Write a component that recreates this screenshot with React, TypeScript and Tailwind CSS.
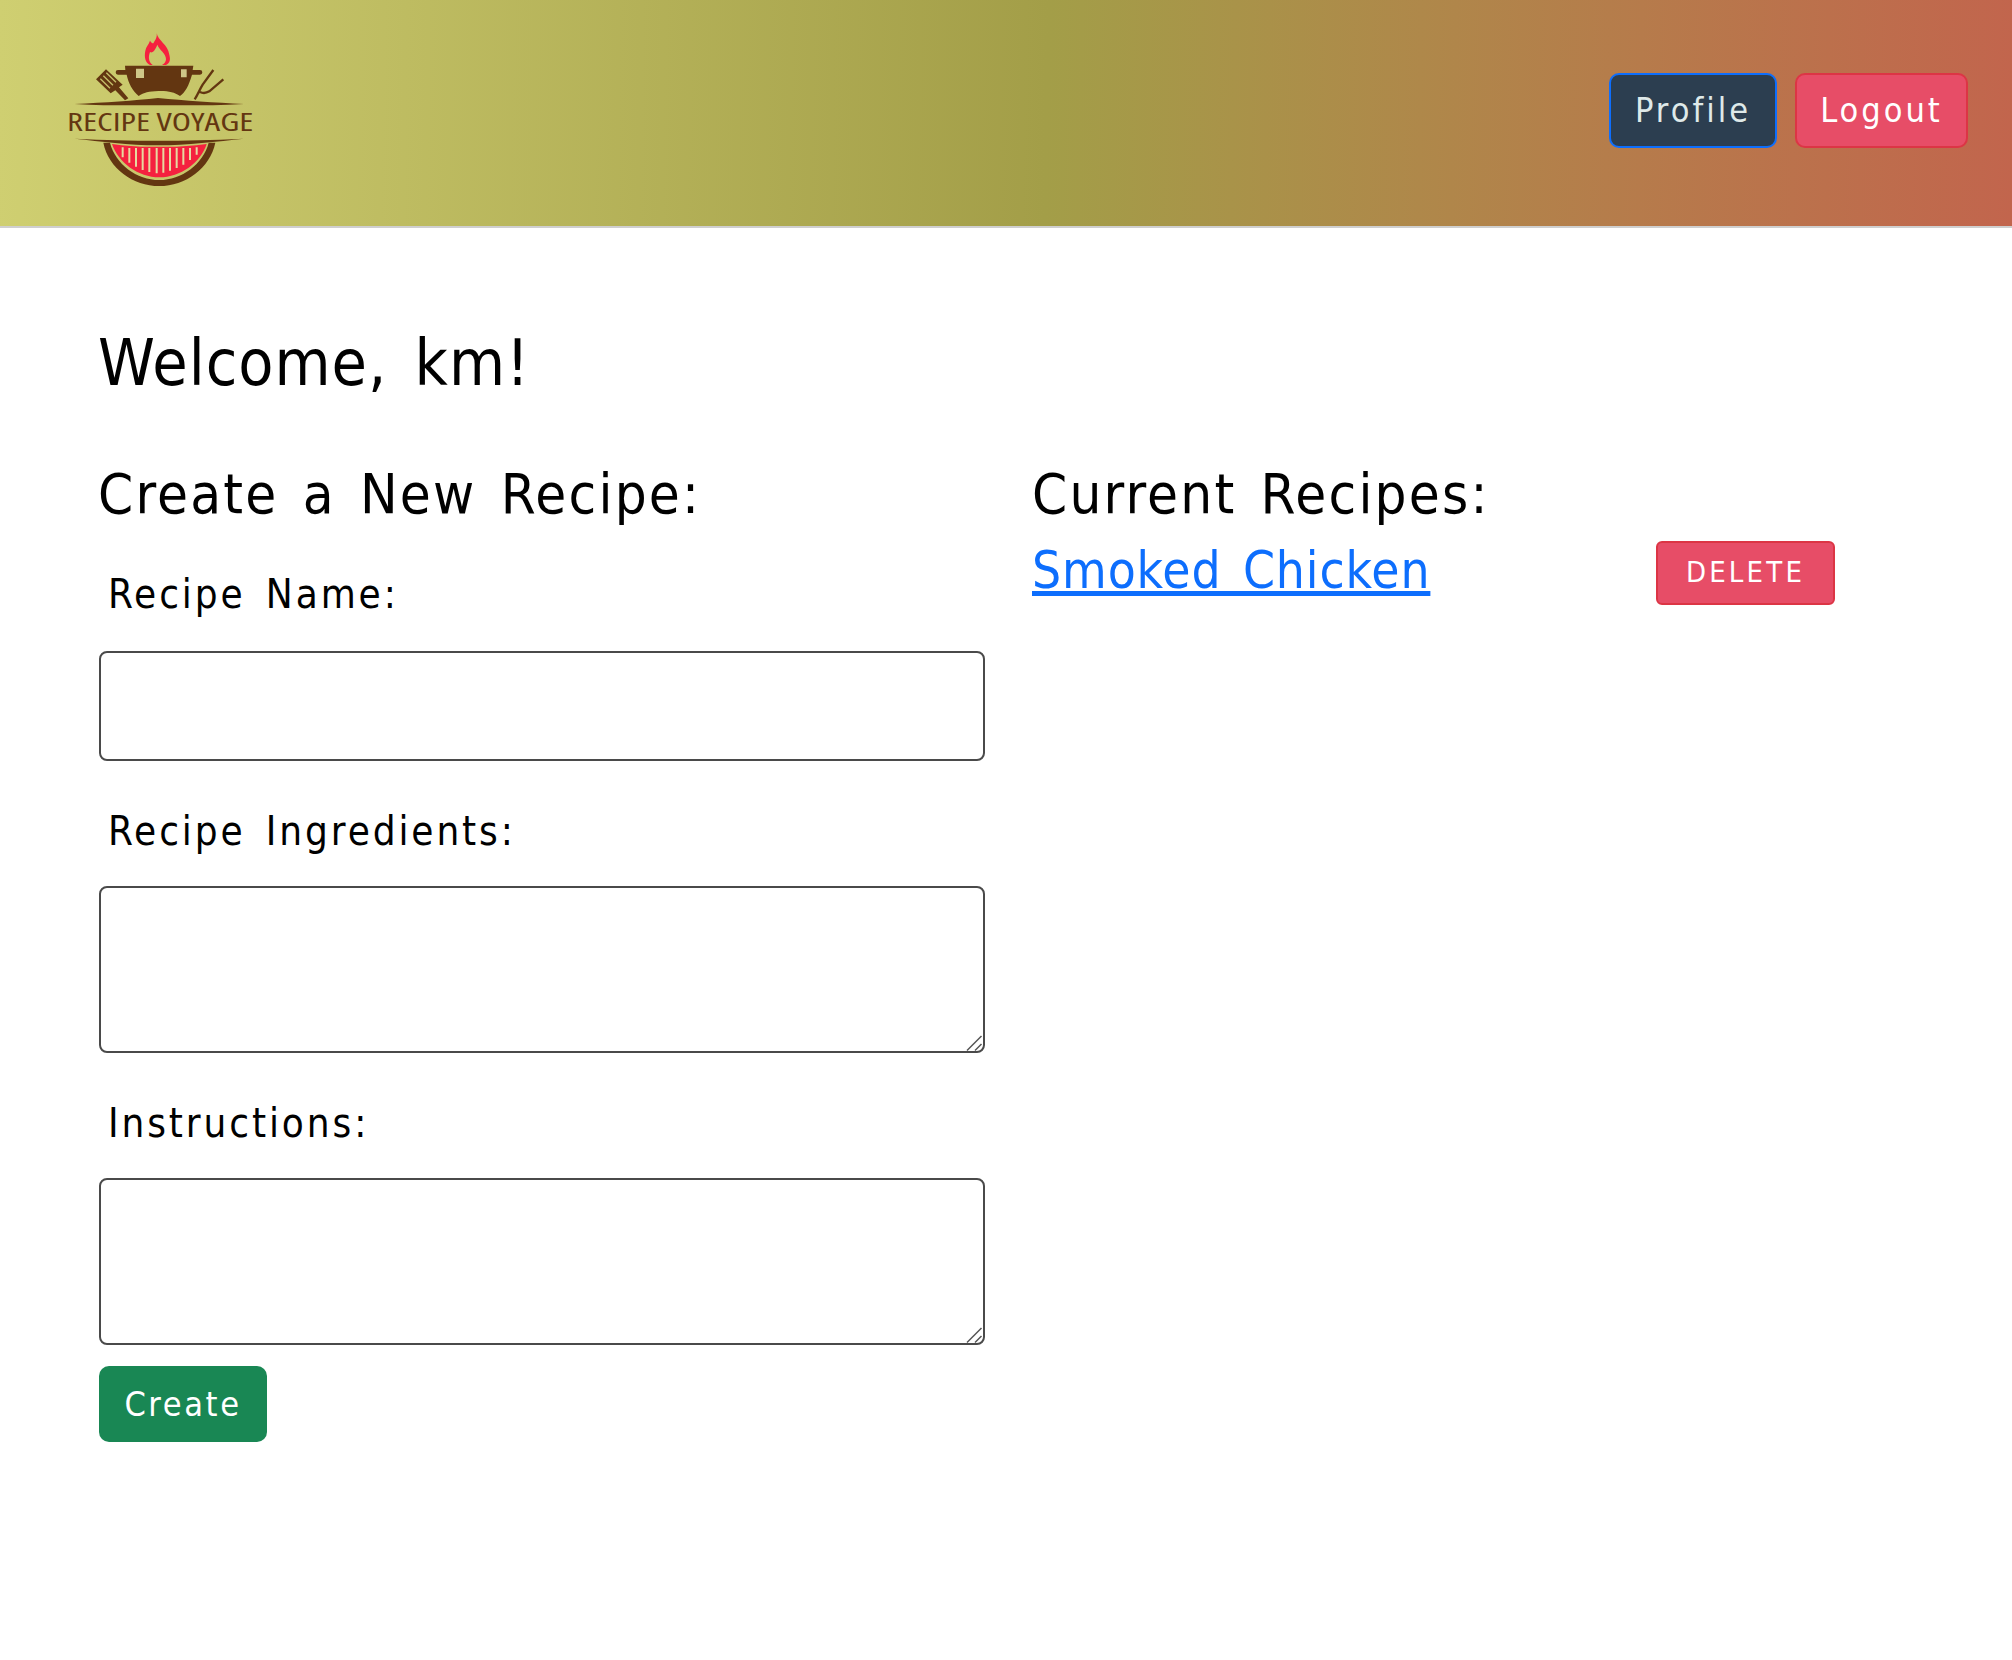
import React from "react";

function Logo() {
  return (
    <svg viewBox="0 0 720 600" className="-mt-[6px] h-[200px] w-[240px] shrink-0">
      {/* flame */}
      <path
        fillRule="evenodd"
        d="M350 70C354 92 384 104 388 134 392 150 390 158 378 165H330C316 158 312 142 316 122 318 110 326 104 330 92 334 98 336 100 340 100 346 90 352 82 350 70zM352 104C358 120 378 130 378 148 378 156 372 162 366 165H338C326 156 324 142 330 126 336 130 344 124 352 104z"
        fill="#f5213f"
      />
      {/* pot */}
      <path d="M255 167H460L458 180H480a7 7 0 0 1 0 14H456C446 228 436 246 420 258 402 246 384 242 355 243 326 244 312 248 296 258 276 240 266 220 260 194H234a7 7 0 0 1 0-14H256z" fill="#633611" />
      <path d="M288 176h24v28h-24zM423 178h17v24h-17z" fill="#cfc687" />
      {/* spatula */}
      <path d="M198 178L168 208 212 250 226 241 255 271 265 265 237 232 248 224z" fill="#633611" />
      <path d="M190 197L219 226M181 206L210 235M199 188L228 217" stroke="#c5be6a" strokeWidth="4" />
      {/* fork */}
      <path d="M520 180L488 224C478 240 474 254 464 268M550 208L508 244C498 250 488 250 480 246" fill="none" stroke="#633611" strokeWidth="7" />
      {/* bars around the name */}
      <path d="M104 282c90-4 180-10 250-18 80 8 170 14 258 18-90 5-170 4-258 4-90 0-170 1-250-4z" fill="#633611" />
      <text
        x="81"
        y="362"
        textLength="559"
        lengthAdjust="spacingAndGlyphs"
        fill="#633611"
        fontSize="76"
        fontWeight="500"
        fontFamily="'Open Sans', sans-serif"
      >
        RECIPE VOYAGE
      </text>
      <path d="M104 386c90 4 170 6 250 6s160-2 258-6c-80 8-170 20-258 20-90 0-170-12-250-20z" fill="#633611" />
      {/* grill bowl */}
      <path d="M190 398C205 475 280 528 358 528 436 528 510 475 526 398H506C490 462 425 510 358 510 290 510 226 462 210 398z" fill="#633611" />
      <path d="M216 402C235 458 295 502 358 502 422 502 482 458 500 402 450 408 400 412 358 410 310 412 260 408 216 402z" fill="#f5213f" />
      <path
        d="M248 412v30M268 414v44M288 414v56M308 414v66M328 414v72M350 414v76M370 414v74M390 414v68M410 414v60M430 414v50M450 414v36M470 412v22"
        stroke="#e6d9a0"
        strokeWidth="6"
      />
    </svg>
  );
}

function FormLabel({ children }: { children: React.ReactNode }) {
  return (
    <label className="mb-[32px] ml-[9px] block text-[40px] leading-[46px] tracking-[2.9px] [word-spacing:6px]">
      {children}
    </label>
  );
}

function TextArea() {
  return (
    <div className="relative">
      <textarea className="block h-[167px] w-full resize-none rounded-[8px] border-2 border-[#4a4a4a]" />
      <svg viewBox="0 0 18 18" className="absolute bottom-[1px] right-[2px] h-[18px] w-[18px]">
        <path d="M2 16.5L16.5 2M10 16.5L16.5 10" stroke="#555" strokeWidth="1.5" />
      </svg>
    </div>
  );
}

export default function App() {
  return (
    <div className="min-h-[1660px] bg-white font-['DejaVu_Sans',sans-serif] font-stretch-condensed text-black">
      <header className="flex h-[228px] items-center justify-between border-b-2 border-[#cfcfcf] bg-[linear-gradient(91deg,#cfcf71_0%,#a39e48_52%,#c2654d_100%)] pl-[40px] pr-[44px]">
        <Logo />
        <div className="-mt-[5px] flex gap-[18px]">
          <button className="h-[75px] w-[168px] rounded-[10px] border-2 border-[#0d6efd] bg-[#2c3e50] text-[34px] tracking-[3px] text-[#dfe9e9]">
            Profile
          </button>
          <button className="h-[75px] w-[173px] rounded-[10px] border-2 border-[#dc3545] bg-[#e74d67] text-[34px] tracking-[3px] text-white">
            Logout
          </button>
        </div>
      </header>

      <main className="px-[99px] pt-[98px]">
        <h1 className="-ml-[1px] text-[64px] leading-[74px] tracking-[1px] [word-spacing:8px]">Welcome, km!</h1>

        <div className="mt-[63px] flex gap-[48px]">
          <section className="w-[886px]">
            <h2 className="-ml-[1px] text-[56px] leading-[62px] tracking-[2.2px] [word-spacing:6px]">Create a New Recipe:</h2>

            <div className="mt-[46px] pb-[2px]">
              <FormLabel>Recipe Name:</FormLabel>
            </div>
            <input className="block h-[110px] w-full rounded-[8px] border-2 border-[#4a4a4a]" />

            <div className="mt-[47px]">
              <FormLabel>Recipe Ingredients:</FormLabel>
            </div>
            <TextArea />

            <div className="mt-[47px]">
              <FormLabel>Instructions:</FormLabel>
            </div>
            <TextArea />

            <button className="mt-[21px] h-[76px] w-[168px] rounded-[10px] bg-[#198754] text-[34px] tracking-[2.6px] text-white">
              Create
            </button>
          </section>

          <section className="w-[802px]">
            <h2 className="-ml-[1px] text-[56px] leading-[62px] tracking-[2.2px] [word-spacing:6px]">Current Recipes:</h2>
            <div className="mt-[12px] flex items-center justify-between">
              <a href="#" className="-ml-[1px] text-[51px] leading-[58px] tracking-[0.9px] text-[#0d6efd] underline [word-spacing:6px]">
                Smoked Chicken
              </a>
              <button className="mt-[4px] h-[64px] w-[179px] rounded-[6px] border-2 border-[#dc3545] bg-[#e74d67] text-[29px] tracking-[3.2px] text-white">
                DELETE
              </button>
            </div>
          </section>
        </div>
      </main>
    </div>
  );
}
